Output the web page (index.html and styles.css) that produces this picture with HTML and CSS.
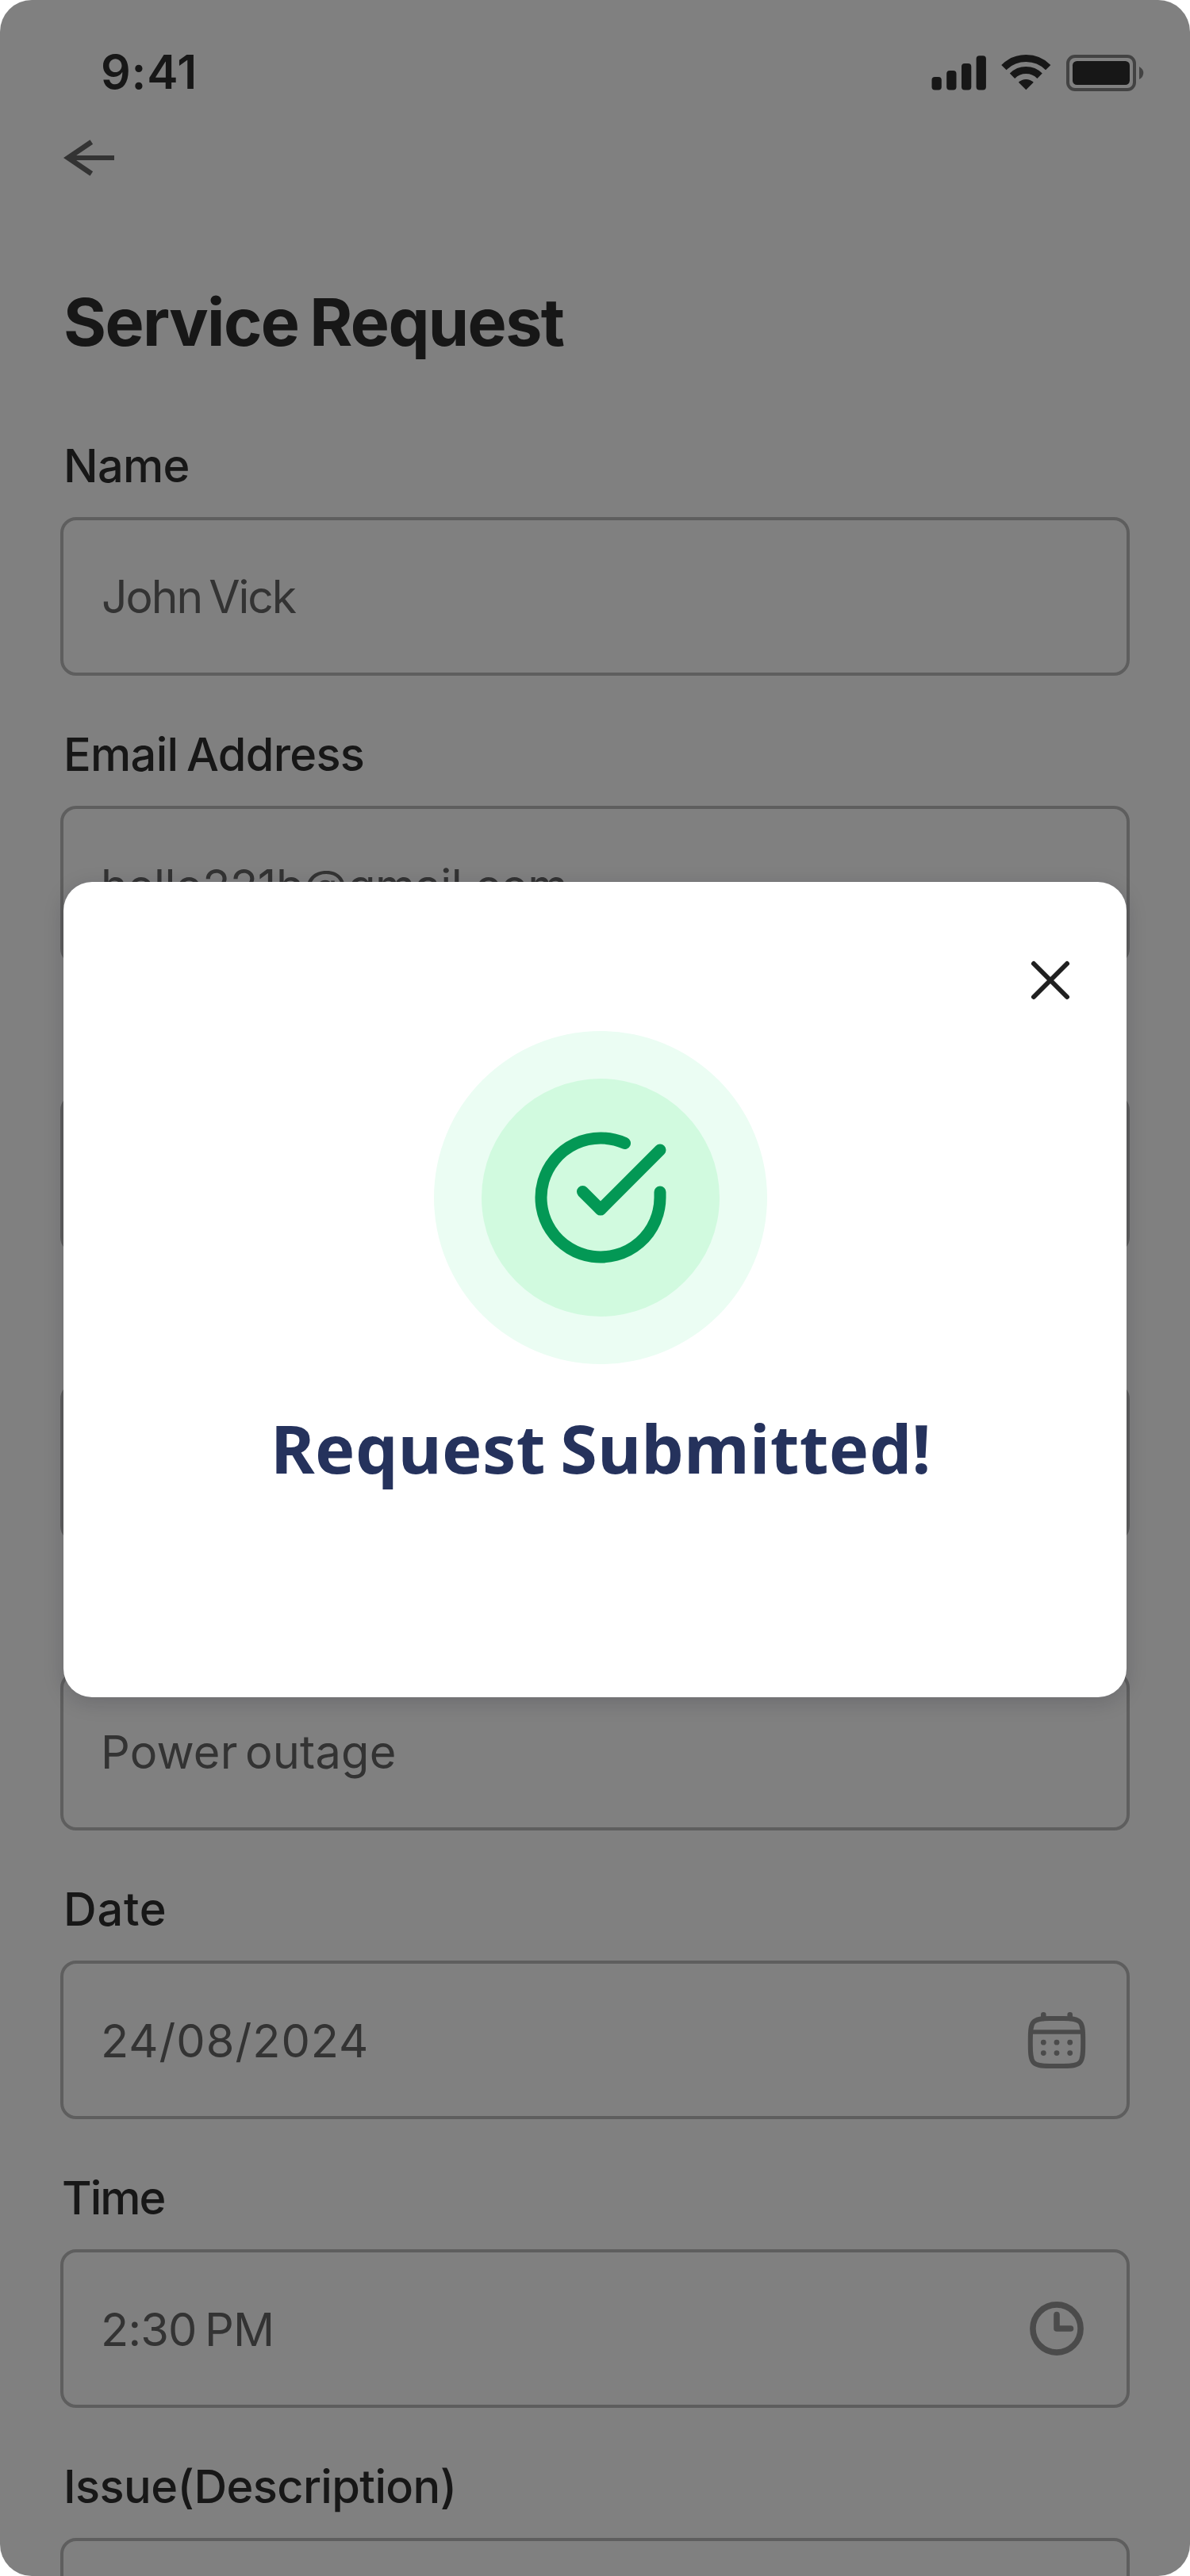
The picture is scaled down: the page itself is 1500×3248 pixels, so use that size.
FILE: index.html
```html
<!DOCTYPE html>
<html lang="en">
<head>
<meta charset="utf-8">
<title>Service Request</title>
<link rel="stylesheet" href="styles.css">
</head>
<body>
<div class="screen">
  <header class="status-bar">
    <span class="clock">9:41</span>
    <svg class="status-icons" width="276" height="56" viewBox="0 0 276 56">
      <g fill="#2e2e2e">
        <rect x="4.5" y="33" width="12.3" height="16.6" rx="4"/>
        <rect x="23.2" y="25" width="12.3" height="24.6" rx="4"/>
        <rect x="42" y="16" width="12.3" height="33.6" rx="4"/>
        <rect x="60.6" y="6.3" width="12.3" height="43.3" rx="4"/>
        <path d="M123.3 49.3 113.8 39.8A13.7 13.7 0 0 1 132.8 39.8Z"/>
        <rect x="182" y="13" width="72" height="30" rx="5.5"/>
      </g>
      <g fill="none" stroke="#2e2e2e" stroke-width="9">
        <path d="M95.4 21.1A39.5 39.5 0 0 1 151.2 21.1"/>
        <path d="M106 31.7A24.5 24.5 0 0 1 140.6 31.7"/>
      </g>
      <rect x="176" y="7" width="84" height="42" rx="9" fill="none" stroke="#868686" stroke-width="4"/>
      <path d="M266 20Q271.3 23 271.3 28T266 36Z" fill="#868686"/>
    </svg>
  </header>

  <nav class="nav">
    <svg width="72" height="56" viewBox="0 0 72 56" fill="none" stroke="#666">
      <path d="M39.3 8 9.8 28 39.3 48" stroke-width="6.5"/>
      <path d="M13 28H68" stroke-width="6"/>
    </svg>
  </nav>

  <h1 class="title">Service Request</h1>

  <form class="form">
    <div class="field"><label class="label label-name">Name</label><div class="input"><span class="value value-name">John Vick</span></div></div>
    <div class="field"><label class="label label-email">Email Address</label><div class="input"><span class="value value-email">hello221b@gmail.com</span></div></div>
    <div class="field"><label class="label"></label><div class="input"></div></div>
    <div class="field"><label class="label"></label><div class="input"></div></div>
    <div class="field"><label class="label"></label><div class="input"><span class="value value-issue">Power outage</span></div></div>
    <div class="field"><label class="label label-date">Date</label>
      <div class="input"><span class="value value-date">24/08/2024</span>
        <svg width="80" height="80" viewBox="0 0 80 80">
          <path d="M6.8 40C6.8 17 8.5 13 31 13H49C71.5 13 73.2 17 73.2 40V46C73.2 69 71.5 73 49 73H31C8.5 73 6.8 69 6.8 46Z" fill="none" stroke="#969696" stroke-width="6"/>
          <path d="M7 30H73" stroke="#969696" stroke-width="5.6"/>
          <path d="M23.3 8.3V13M56.7 8.3V13" stroke="#969696" stroke-width="6.6" stroke-linecap="round"/>
          <g fill="#969696"><circle cx="23.3" cy="43.2" r="3.4"/><circle cx="40" cy="43.2" r="3.4"/><circle cx="56.7" cy="43.2" r="3.4"/><circle cx="23.3" cy="56.6" r="3.4"/><circle cx="40" cy="56.6" r="3.4"/><circle cx="56.7" cy="56.6" r="3.4"/></g>
        </svg>
      </div>
    </div>
    <div class="field"><label class="label label-time">Time</label>
      <div class="input"><span class="value value-time">2:30 PM</span>
        <svg width="80" height="80" viewBox="0 0 80 80" fill="none" stroke="#969696" stroke-width="7.6" stroke-linecap="round" stroke-linejoin="round">
          <circle cx="40" cy="40" r="30.1"/><path d="M40 22.5V40H57.5"/>
        </svg>
      </div>
    </div>
    <div class="field"><label class="label label-description">Issue(Description)</label><div class="input"></div></div>
  </form>

  <div class="overlay">
    <section class="modal">
      <svg class="close" width="60" height="60" viewBox="0 0 60 60" fill="none" stroke="#202020" stroke-width="6" stroke-linecap="round">
        <path d="M9 9 51 51M51 9 9 51"/>
      </svg>
      <div class="badge">
        <div class="badge-core">
          <svg width="180" height="180" viewBox="0 0 24 24" fill="none" stroke="#039855" stroke-width="2" stroke-linecap="round" stroke-linejoin="round">
            <path d="M22 11.08V12A10 10 0 1 1 16.07 2.86"/>
            <path d="M22 4 12 14.01 9 11.01"/>
          </svg>
        </div>
      </div>
      <h2 class="message">Request Submitted!</h2>
    </section>
  </div>
</div>
</body>
</html>
```
FILE: styles.css
```css
* { box-sizing: border-box; }

body {
  margin: 0;
  background: #fff;
  font-family: Inter, "Liberation Sans", sans-serif;
}

svg { display: block; flex: none; }

.screen {
  position: relative;
  width: 1500px;
  height: 3248px;
  overflow: hidden;
  border-radius: 40px;
  background: #fff;
  color: #2e2e2e;
}

.status-bar {
  display: flex;
  justify-content: space-between;
  align-items: flex-start;
  height: 170px;
  padding: 60px 54px 0 127px;
}

.clock {
  font-size: 59px;
  font-weight: 600;
  line-height: 61px;
  letter-spacing: 0.8px;
}

.status-icons { margin-top: 4px; }

.nav { height: 186px; padding: 1px 76px 0; }

.title {
  margin: 0;
  padding-left: 80px;
  height: 100px;
  font-size: 82.5px;
  font-weight: 700;
  line-height: 100px;
  letter-spacing: -1.6px;
  word-spacing: -4px;
}

.form {
  display: flex;
  flex-direction: column;
  gap: 64px;
  padding: 96px 76px 0;
}

.field {
  display: flex;
  flex-direction: column;
  gap: 29px;
}

.label {
  height: 71px;
  padding-left: 4px;
  font-size: 57.7px;
  font-weight: 500;
  line-height: 71px;
  white-space: nowrap;
}

.label-name { letter-spacing: -0.7px; }
.label-email { letter-spacing: -0.7px; word-spacing: -4px; }
.label-date { letter-spacing: 0.8px; }
.label-time { padding-left: 2px; letter-spacing: -2px; }
.label-description { letter-spacing: -0.6px; }

.input {
  display: flex;
  align-items: center;
  justify-content: space-between;
  height: 200px;
  padding: 0 48px 0 47px;
  border: 4px solid #bcbcbc;
  border-radius: 20px;
}

.value {
  padding-top: 2px;
  color: #666;
  font-size: 57.7px;
  line-height: 72px;
  white-space: nowrap;
}

.value-name { padding-left: 1px; font-size: 57px; letter-spacing: -2px; word-spacing: -5px; }
.value-email { letter-spacing: -0.4px; }
.value-issue { letter-spacing: 0.2px; word-spacing: -7px; }
.value-date { letter-spacing: 1px; }
.value-time { letter-spacing: -0.8px; word-spacing: -5px; }

.overlay {
  position: absolute;
  inset: 0;
  display: flex;
  align-items: flex-start;
  justify-content: center;
  padding-top: 1112px;
  background: rgba(0, 0, 0, 0.498);
}

.modal {
  display: flex;
  flex-direction: column;
  align-items: center;
  width: 1340px;
  height: 1028px;
  padding: 94px 0 0 15px;
  border-radius: 36px;
  background: #fff;
  box-shadow: 0 6px 26px rgba(16, 16, 36, 0.18);
}

.close {
  align-self: flex-end;
  margin-right: 66px;
}

.badge {
  display: flex;
  align-items: center;
  justify-content: center;
  width: 420px;
  height: 420px;
  margin: 34px 1px 0 0;
  border-radius: 50%;
  background: #ebfdf3;
}

.badge-core {
  display: flex;
  align-items: center;
  justify-content: center;
  width: 300px;
  height: 300px;
  border-radius: 50%;
  background: #d1fadf;
}

.message {
  margin: 56px 0 0;
  color: #25325c;
  font-family: "Noto Sans", sans-serif;
  font-size: 84.5px;
  font-weight: 700;
  line-height: 100px;
  letter-spacing: 0.4px;
  word-spacing: -4px;
  white-space: nowrap;
}
```
